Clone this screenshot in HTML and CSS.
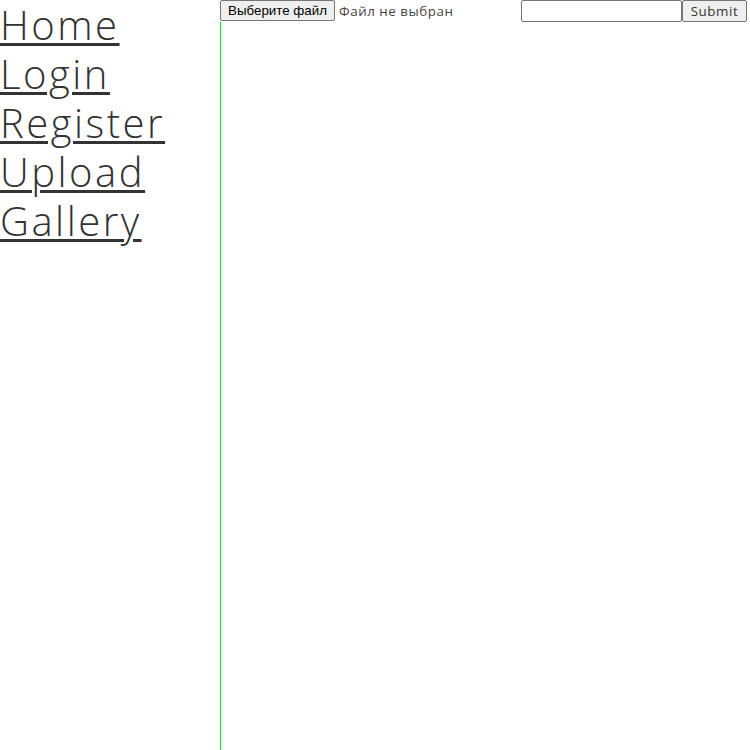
FILE: index.html
```html
<!DOCTYPE html>
<html lang="ru">
<head>
<meta charset="utf-8">
<title>Upload</title>
<link rel="stylesheet" href="styles.css">
</head>
<body>
<div class="layout">
  <nav class="sidebar">
    <a class="nav-link" href="#">Home</a>
    <a class="nav-link" href="#">Login</a>
    <a class="nav-link" href="#">Register</a>
    <a class="nav-link" href="#">Upload</a>
    <a class="nav-link" href="#">Gallery</a>
  </nav>
  <main class="main">
    <form class="upload-form">
      <div class="file-field">
        <button type="button" class="file-btn">Выберите файл</button>
        <span class="file-status">Файл не выбран</span>
      </div>
      <input type="text" class="text-input">
      <button type="button" class="submit-btn">Submit</button>
    </form>
    <div class="content"></div>
  </main>
</div>
</body>
</html>
```
FILE: styles.css
```css
html, body {
  margin: 0;
  padding: 0;
  background: #fff;
}
body {
  font-family: "Open Sans", "DejaVu Sans", sans-serif;
  color: #333;
}
.layout {
  display: flex;
  height: 100vh;
}
.sidebar {
  width: 220px;
  flex: none;
  display: flex;
  flex-direction: column;
  align-items: flex-start;
}
.nav-link {
  font-family: "Open Sans", sans-serif;
  font-weight: 300;
  font-size: 40px;
  line-height: 49px;
  letter-spacing: 2.5px;
  color: #333;
  text-decoration: underline;
  text-decoration-thickness: 3px;
  text-underline-offset: 3px;
}
.main {
  flex: 1;
  display: flex;
  flex-direction: column;
}
.upload-form {
  display: flex;
  align-items: flex-start;
  height: 22px;
  margin: 0;
}
.file-field {
  width: 297px;
  display: flex;
  align-items: center;
  gap: 4px;
  margin-right: 4px;
}
.file-btn {
  font-family: "Liberation Sans", Arial, sans-serif;
  font-size: 13.33px;
  color: #000;
  background: #efefef;
  border: 1px solid #767676;
  border-radius: 2px;
  height: 21px;
  width: 115px;
  padding: 0 6px;
  margin: 0;
}
.file-status {
  font-family: "Open Sans", sans-serif;
  font-size: 13.33px;
  letter-spacing: 0.55px;
  color: #444;
}
.text-input {
  width: 161px;
  height: 22px;
  box-sizing: border-box;
  border: 1px solid #767676;
  border-radius: 2px;
  margin: 0;
  padding: 1px 2px;
}
.submit-btn {
  font-family: "Open Sans", sans-serif;
  font-size: 13.33px;
  letter-spacing: 0.6px;
  color: #333;
  background: #efefef;
  border: 1px solid #767676;
  border-radius: 2px;
  height: 22px;
  width: 65px;
  padding: 0 6px;
  margin: 0;
}
.content {
  flex: 1;
  border-left: 1px solid #00ff00;
}
```
